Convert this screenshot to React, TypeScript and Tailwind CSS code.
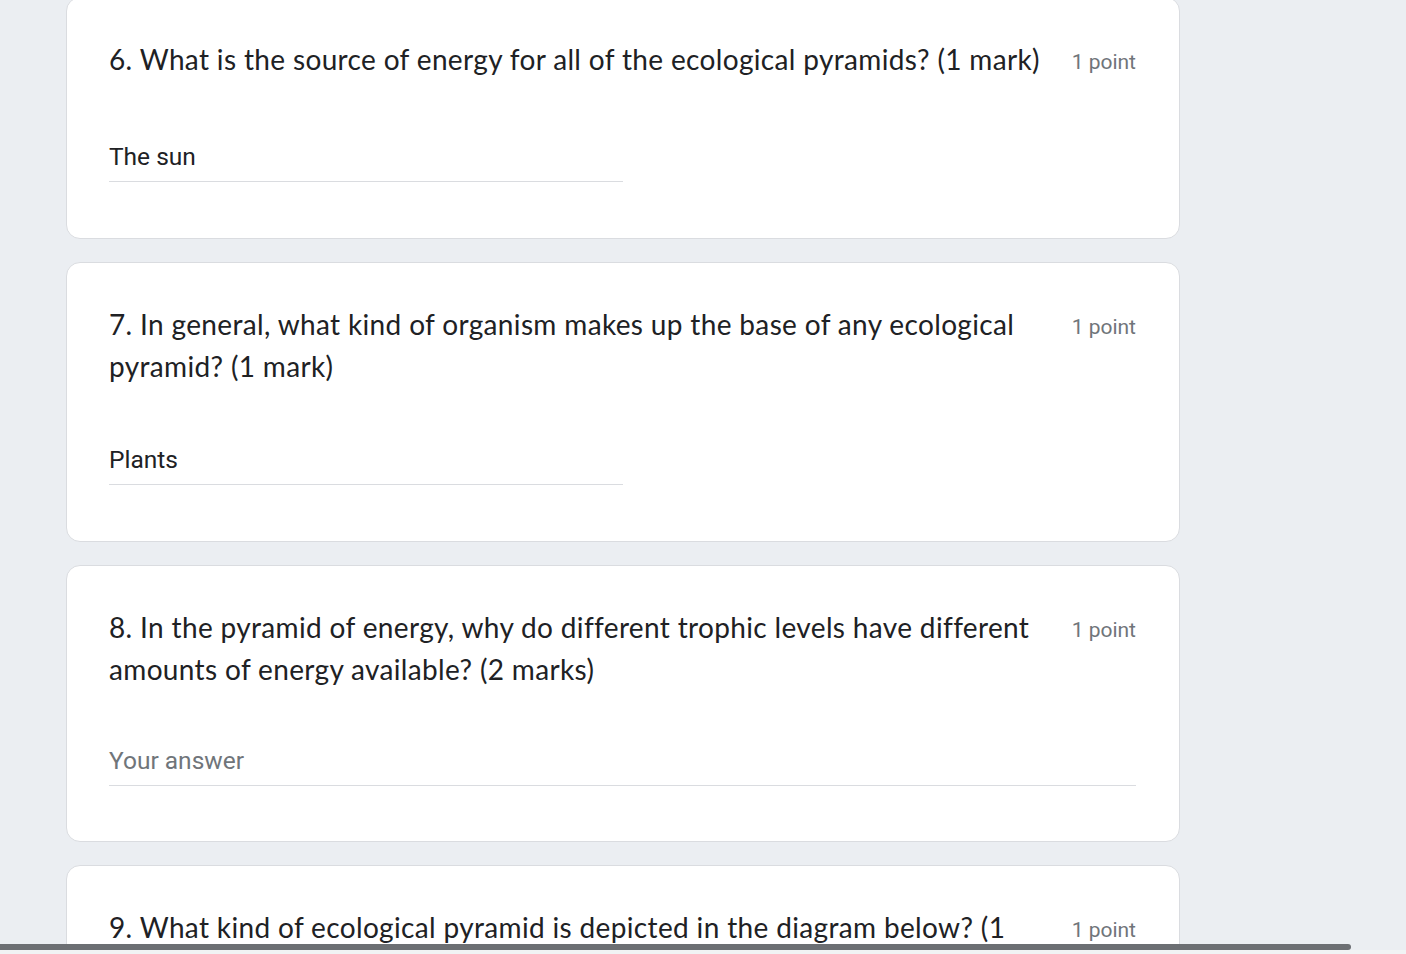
import React from "react";

type Question = {
  title: string;
  answer?: string;
  fullWidth?: boolean;
  gap?: string;
  pb?: string;
};

const questions: Question[] = [
  {
    title: "6. What is the source of energy for all of the ecological pyramids? (1 mark)",
    answer: "The sun",
    gap: "mt-[61px]",
    pb: "pb-[56px]",
  },
  {
    title: "7. In general, what kind of organism makes up the base of any ecological pyramid? (1 mark)",
    answer: "Plants",
    gap: "mt-[57px]",
    pb: "pb-[56px]",
  },
  {
    title: "8. In the pyramid of energy, why do different trophic levels have different amounts of energy available? (2 marks)",
    fullWidth: true,
    gap: "mt-[55px]",
    pb: "pb-[55px]",
  },
  {
    title: "9. What kind of ecological pyramid is depicted in the diagram below? (1 mark)",
    pb: "pb-[56px]",
  },
];

function QuestionCard({ q, last }: { q: Question; last?: boolean }) {
  return (
    <div className={`bg-white border border-[#dadce0] rounded-[14px] pt-[40px] pl-[42px] pr-[43px] ${q.pb}`}>
      <div className="flex items-start">
        <div className="flex-1 text-[28px] leading-[42px] text-[#202124] font-['Lato','Roboto',sans-serif] tracking-[0.35px]">
          {q.title}
        </div>
        <div className="ml-[22px] shrink-0 pt-[9px] text-[21px] leading-[30px] text-[#70757a] font-['Roboto',sans-serif]">
          1 point
        </div>
      </div>
      {!last && (
        <div className={`${q.gap} ${q.fullWidth ? "w-full" : "w-[514px]"}`}>
          <div
            className={`pb-[8px] border-b border-[#dadce0] text-[24.5px] leading-[32px] font-['Roboto',sans-serif] ${
              q.answer ? "text-[#202124]" : "text-[#70757a]"
            }`}
          >
            {q.answer ?? "Your answer"}
          </div>
        </div>
      )}
    </div>
  );
}

export default function App() {
  return (
    <div className="relative h-[954px] w-[1406px] overflow-hidden bg-[#ebeef2]">
      <div className="w-[1114px] ml-[66px] -mt-[3px] flex flex-col gap-[23px]">
        {questions.map((q, i) => (
          <QuestionCard key={i} q={q} last={i === questions.length - 1} />
        ))}
      </div>

      {/* horizontal scrollbar */}
      <div className="absolute left-0 right-0 bottom-0 h-[4px] bg-[#f1f3f4]" />
      <div className="absolute left-0 bottom-[4px] h-[6px] w-[1351px] rounded-r-full bg-[#6c6f73]" />
    </div>
  );
}
